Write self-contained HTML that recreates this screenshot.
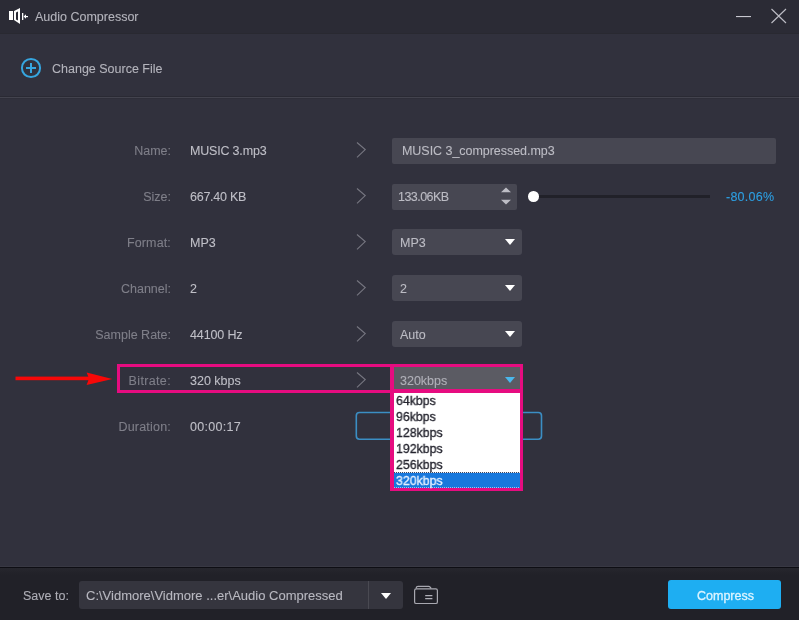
<!DOCTYPE html>
<html><head><meta charset="utf-8">
<style>
*{margin:0;padding:0;box-sizing:border-box}
html,body{width:799px;height:620px;overflow:hidden;background:#31313d;font-family:"Liberation Sans",sans-serif;font-size:12.5px;line-height:14px}
.a{position:absolute;white-space:nowrap;will-change:transform;-webkit-text-stroke:0.1px currentColor}
#title{left:0;top:0;width:799px;height:34px;background:linear-gradient(#2b2b35 0,#2b2b35 33px,#292931 33px)}
#sep1{left:0;top:96px;width:799px;height:1px;background:#2a2a34}
#sep2{left:0;top:97px;width:799px;height:1px;background:#43434e}
#footer{left:0;top:566px;width:799px;height:54px;background:linear-gradient(#383843 0,#383843 1px,#0e0e14 1px,#0e0e14 2px,#26262d 2px,#212128 9px,#212128 100%)}
#footline{left:0;top:566px;width:799px;height:2px;background:#1b1b22}
.lbl{color:#7f7f89;text-align:right;width:160px;left:11px}
.val{color:#bfbfc7;left:190px}
.box{background:#474752;border-radius:2px}
.tri{width:0;height:0;border-left:5px solid transparent;border-right:5px solid transparent;border-top:6px solid #fff}
.itxt{color:#bcbcc4}
.li{font-size:13.4px;transform:scaleX(0.92);transform-origin:0 0;-webkit-text-stroke:0.35px currentColor}
</style></head><body>
<div class="a" id="title"></div>
<!-- title icon -->
<svg class="a" style="left:0;top:0" width="40" height="34" viewBox="0 0 40 34">
  <rect x="9" y="11" width="4" height="9" fill="#fff"/>
  <path d="M14 11 L20 8 L20 24 L14 20 Z M16 12.5 L16 19.5 L18 20.5 L18 11.5 Z" fill="#fff" fill-rule="evenodd"/>
  <rect x="22" y="13" width="1.3" height="7" fill="#fff"/>
  <path d="M23.6 16.5 L26 14.3 L26 18.7 Z" fill="#fff"/>
  <rect x="25" y="16" width="3" height="1.2" fill="#fff"/>
</svg>
<div class="a" style="left:35px;top:9.7px;color:#b4b4bc">Audio Compressor</div>
<svg class="a" style="left:730px;top:0" width="69" height="34">
  <rect x="6" y="16" width="15" height="1.1" fill="#c8c8d0"/>
  <path d="M41.5 9 L56 23 M56 9 L41.5 23" stroke="#bcbcc4" stroke-width="1.15"/>
</svg>

<!-- change source -->
<svg class="a" style="left:0;top:40px" width="50" height="50">
  <circle cx="31" cy="28" r="9.1" fill="none" stroke="#36a6e0" stroke-width="2"/>
  <rect x="26" y="27" width="10" height="2" fill="#36a6e0"/>
  <rect x="30" y="23" width="2" height="10" fill="#36a6e0"/>
</svg>
<div class="a" style="left:52px;top:61.6px;color:#b4b4bc">Change Source File</div>
<div class="a" id="sep1"></div>
<div class="a" id="sep2"></div>
<div class="a" style="left:0;top:98px;width:799px;height:1px;background:#2e2e39"></div>

<!-- rows -->
<div class="a lbl" style="top:144.3px">Name:</div>
<div class="a val" style="top:144.3px;letter-spacing:-0.19px">MUSIC 3.mp3</div>
<div class="a lbl" style="top:190.3px">Size:</div>
<div class="a val" style="top:190.3px;letter-spacing:-0.26px">667.40 KB</div>
<div class="a lbl" style="top:236.3px;letter-spacing:0.15px">Format:</div>
<div class="a val" style="top:236.3px">MP3</div>
<div class="a lbl" style="top:282.3px">Channel:</div>
<div class="a val" style="top:282.3px">2</div>
<div class="a lbl" style="top:328.3px">Sample Rate:</div>
<div class="a val" style="top:328.3px;letter-spacing:-0.13px">44100 Hz</div>
<div class="a lbl" style="top:374.3px;letter-spacing:0.35px">Bitrate:</div>
<div class="a val" style="top:374.3px">320 kbps</div>
<div class="a lbl" style="top:420.3px;letter-spacing:0.2px">Duration:</div>
<div class="a val" style="top:420.3px;letter-spacing:0.3px">00:00:17</div>

<svg class="a" style="left:350px;top:130px" width="25" height="310">
  <path d="M7 12.5 L15.2 19.6 L7 27.3 M7 58.5 L15.2 65.6 L7 73.3 M7 104.5 L15.2 111.6 L7 119.3 M7 150.5 L15.2 157.6 L7 165.3 M7 196.5 L15.2 203.6 L7 211.3 M7 242.5 L15.2 249.6 L7 257.3" fill="none" stroke="#767680" stroke-width="1.15"/>
</svg>

<!-- name input -->
<div class="a" style="left:392px;top:137.5px;width:384px;height:26px;background:#474752;border-radius:2px"></div>
<div class="a itxt" style="left:402.4px;top:144.3px;letter-spacing:-0.04px">MUSIC 3_compressed.mp3</div>

<!-- size input -->
<div class="a box" style="left:392px;top:184px;width:125px;height:26px"></div>
<div class="a itxt" style="left:398px;top:190.3px;letter-spacing:-0.54px">133.06KB</div>
<svg class="a" style="left:495px;top:180px" width="22" height="30">
  <path d="M6 12.2 L11 7.6 L16 12.2 Z M6 19.8 L16 19.8 L11 24.6 Z" fill="#bdbdc5"/>
</svg>
<div class="a" style="left:533px;top:195px;width:177px;height:3px;background:#212129"></div>
<div class="a" style="left:527.7px;top:190.8px;width:10.6px;height:10.6px;border-radius:50%;background:#fff"></div>
<div class="a" style="left:726px;top:190.3px;color:#2d9fe2;letter-spacing:0.25px">-80.06%</div>

<!-- format -->
<div class="a box" style="left:392px;top:229px;width:130px;height:26px;border-radius:3px"></div>
<div class="a itxt" style="left:400px;top:236.3px">MP3</div>
<div class="a tri" style="left:505px;top:239px"></div>
<!-- channel -->
<div class="a box" style="left:392px;top:275px;width:130px;height:26px;border-radius:3px"></div>
<div class="a itxt" style="left:400px;top:282.3px">2</div>
<div class="a tri" style="left:505px;top:285px"></div>
<!-- sample -->
<div class="a box" style="left:392px;top:321px;width:130px;height:26px;border-radius:3px"></div>
<div class="a itxt" style="left:400px;top:328.3px">Auto</div>
<div class="a tri" style="left:505px;top:331px"></div>

<!-- duration blue box -->
<svg class="a" style="left:350px;top:405px" width="200" height="40"><rect x="6.3" y="7.5" width="185.2" height="26.7" rx="3.2" fill="none" stroke="#3b8ec4" stroke-width="1.6"/></svg>

<!-- bitrate highlight -->
<div class="a" style="left:117px;top:364px;width:277px;height:29px;border:3px solid #e60c80;border-right-width:4px"></div>
<div class="a" style="left:390px;top:364px;width:133px;height:29px;background:#e60c80"></div>
<div class="a" style="left:390.4px;top:393px;width:132.6px;height:98px;background:#e60c80"></div>
<div class="a" style="left:394px;top:367px;width:126px;height:22.4px;background:#5b5b63"></div>
<div class="a" style="left:400px;top:373.5px;color:#b0b0b8">320kbps</div>
<div class="a" style="left:505px;top:377px;width:0;height:0;border-left:5px solid transparent;border-right:5px solid transparent;border-top:6px solid #4ab8ec"></div>
<div class="a" style="left:394px;top:393px;width:126px;height:80px;background:#fff"></div>
<div class="a" style="left:394px;top:472px;width:126px;height:16px;background:#1878dc"></div>
<div class="a" style="left:394px;top:472px;width:126px;height:1px;background:repeating-linear-gradient(90deg,#3a4660 0,#3a4660 1px,#e8ecf4 1px,#e8ecf4 2px)"></div>
<div class="a" style="left:394px;top:487px;width:126px;height:1px;background:repeating-linear-gradient(90deg,#9cc4ee 0,#9cc4ee 1px,#1878dc 1px,#1878dc 2px)"></div>
<div class="a li" style="left:395.5px;top:394.2px;color:#25252f">64kbps</div>
<div class="a li" style="left:395.5px;top:410.2px;color:#25252f">96kbps</div>
<div class="a li" style="left:395.5px;top:426.2px;color:#25252f">128kbps</div>
<div class="a li" style="left:395.5px;top:442px;color:#25252f">192kbps</div>
<div class="a li" style="left:395.5px;top:457.8px;color:#25252f">256kbps</div>
<div class="a li" style="left:395.5px;top:473.6px;color:#e4f0ff">320kbps</div>

<!-- arrow -->
<svg class="a" style="left:0;top:360px" width="120" height="40">
  <rect x="15.5" y="16.6" width="74" height="3.6" fill="#f70808"/>
  <path d="M112.4 19 L86.6 12.6 L89 18.6 L86.6 25 Z" fill="#f70808"/>
</svg>

<!-- footer -->
<div class="a" id="footer"></div>
<div class="a" style="left:23px;top:588.5px;color:#aeaeb6">Save to:</div>
<div class="a" style="left:79px;top:581px;width:324px;height:28px;background:#35353e;border-radius:3px"></div>
<div class="a" style="left:368px;top:581px;width:1px;height:28px;background:#4a4a52"></div>
<div class="a" style="left:86px;top:588.7px;color:#b8b8c0;font-size:13px">C:\Vidmore\Vidmore ...er\Audio Compressed</div>
<div class="a tri" style="left:380.5px;top:592.5px"></div>
<svg class="a" style="left:405px;top:580px" width="40" height="30">
  <rect x="9.6" y="8.9" width="22.8" height="14.6" rx="1.6" fill="none" stroke="#a8a8b0" stroke-width="1.2"/>
  <path d="M11.2 8.6 L11.2 7.9 Q11.4 6.4 13 6.4 L23.6 6.4 Q24.6 6.4 25.4 7.4 L26.2 8.6" fill="none" stroke="#a8a8b0" stroke-width="1.2"/>
  <path d="M20.2 15.6 L27.4 15.6 M20.2 18.6 L27.4 18.6" stroke="#b0b0b8" stroke-width="1.1"/>
</svg>
<div class="a" style="left:668px;top:580px;width:113px;height:29px;background:#1eaef2;border-radius:3px"></div>
<div class="a" style="left:668.7px;top:588.6px;width:113px;text-align:center;color:#dcf4ff;-webkit-text-stroke:0.3px currentColor">Compress</div>
</body></html>
